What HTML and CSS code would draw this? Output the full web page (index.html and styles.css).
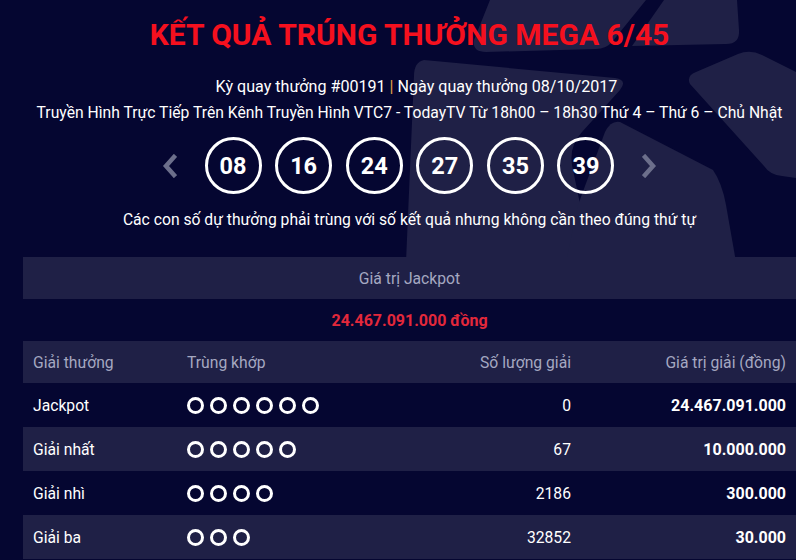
FILE: index.html
```html
<!DOCTYPE html>
<html lang="vi">
<head>
<meta charset="utf-8">
<title>Kết quả Mega 6/45</title>
<link rel="stylesheet" href="styles.css">
</head>
<body>
<svg class="bg-deco" width="796" height="262" viewBox="0 0 796 262" aria-hidden="true">
  <path d="M490,0 H646 L612,42 Q606,49 596,49 L486,52 Q472,52 474,40 Z"/>
  <path d="M664,0 H737 L739,30 Q740,44 726,44 L632,46 Z"/>
  <path d="M424,60 Q414,62 414,76 L406,262 H592 L572,165 Q569,146 582,132 L620,90 Q628,80 615,78 Z"/>
  <path d="M620,122 Q611,120 605,132 L578,205 L566,262 H736 L726,205 Q722,183 713,170 Z"/>
  <path d="M690,84 Q686,76 696,72 L738,54 Q750,49 762,55 L796,72 V178 L782,176 Q770,175 764,166 Z"/>
</svg>
<main class="wrap">
  <h1 class="title">KẾT QUẢ TRÚNG THƯỞNG MEGA 6/45</h1>
  <p class="info draw">Kỳ quay thưởng #00191 <span class="sep">|</span> Ngày quay thưởng 08/10/2017</p>
  <p class="info">Truyền Hình Trực Tiếp Trên Kênh Truyền Hình VTC7 - TodayTV Từ 18h00 – 18h30 Thứ 4 – Thứ 6 – Chủ Nhật</p>
  <div class="balls">
    <svg class="chev" width="15" height="24" viewBox="0 0 15 24"><path d="M12,3 L4,12 L12,21" /></svg>
    <span class="ball">08</span>
    <span class="ball">16</span>
    <span class="ball">24</span>
    <span class="ball">27</span>
    <span class="ball">35</span>
    <span class="ball">39</span>
    <svg class="chev" width="15" height="24" viewBox="0 0 15 24"><path d="M3,3 L11,12 L3,21" /></svg>
  </div>
  <p class="info note">Các con số dự thưởng phải trùng với số kết quả nhưng không cần theo đúng thứ tự</p>

  <section class="results">
    <div class="band head">Giá trị Jackpot</div>
    <div class="band jackpot">24.467.091.000 đồng</div>
    <div class="row head">
      <span>Giải thưởng</span><span>Trùng khớp</span><span class="r">Số lượng giải</span><span class="r">Giá trị giải (đồng)</span>
    </div>
    <div class="row">
      <span>Jackpot</span>
      <span class="dots"><i></i><i></i><i></i><i></i><i></i><i></i></span>
      <span class="r">0</span><span class="r b">24.467.091.000</span>
    </div>
    <div class="row alt">
      <span>Giải nhất</span>
      <span class="dots"><i></i><i></i><i></i><i></i><i></i></span>
      <span class="r">67</span><span class="r b">10.000.000</span>
    </div>
    <div class="row">
      <span>Giải nhì</span>
      <span class="dots"><i></i><i></i><i></i><i></i></span>
      <span class="r">2186</span><span class="r b">300.000</span>
    </div>
    <div class="row alt">
      <span>Giải ba</span>
      <span class="dots"><i></i><i></i><i></i></span>
      <span class="r">32852</span><span class="r b">30.000</span>
    </div>
  </section>
</main>
</body>
</html>
```
FILE: styles.css
```css
html, body {
  margin: 0;
  padding: 0;
  overflow: hidden;
}
body {
  background: #050631;
  font-family: Roboto, "Noto Sans", sans-serif;
  color: #ffffff;
  position: relative;
  height: 560px;
}
.bg-deco {
  position: absolute;
  left: 0;
  top: 0;
  z-index: 0;
}
.bg-deco path {
  fill: #1f2046;
}
.wrap {
  position: relative;
  z-index: 1;
  margin-left: 23px;
  width: 773px;
  padding-top: 17px;
}
.title {
  margin: 0;
  text-align: center;
  font-size: 30px;
  line-height: 36px;
  font-weight: 700;
  color: #f5101e;
}
.info {
  margin: 0;
  text-align: center;
  font-size: 15.7px;
  line-height: 26px;
  color: #ffffff;
  white-space: nowrap;
}
.info.draw {
  font-size: 16.1px;
  margin-top: 21px;
  padding-left: 14px;
}
.sep {
  color: #e6a54a;
}
.balls {
  display: flex;
  align-items: center;
  justify-content: center;
  gap: 13.6px;
  margin-top: 11px;
}
.chev {
  display: block;
}
.chev path {
  fill: none;
  stroke: #6c6f8b;
  stroke-width: 4.5;
  stroke-linecap: square;
  stroke-linejoin: miter;
}
.balls .chev:first-child {
  margin-right: 14px;
}
.balls .chev:last-child {
  margin-left: 14px;
}
.ball {
  box-sizing: border-box;
  width: 57px;
  height: 57px;
  border: 3px solid #ffffff;
  border-radius: 50%;
  display: flex;
  align-items: center;
  justify-content: center;
  font-size: 23.5px;
  font-weight: 700;
}
.note {
  margin-top: 13px;
}
.results {
  margin-top: 24px;
  width: 773px;
  font-size: 15.7px;
}
.band {
  height: 42px;
  display: flex;
  align-items: center;
  justify-content: center;
}
.band.jackpot {
  color: #e3283b;
  font-weight: 700;
  font-size: 16px;
}
.head {
  background: #1f2046;
  color: #a5a8c1;
}
.row {
  display: grid;
  grid-template-columns: 164px 240px 154px 215px;
  align-items: center;
  height: 44px;
  white-space: nowrap;
}
.row.head {
  height: 42px;
}
.row > span {
  padding: 0 10px;
}
.row > span:nth-child(2) {
  padding-left: 0;
}
.row.alt {
  background: #1f2046;
}
.r {
  text-align: right;
}
.b {
  font-weight: 700;
  font-size: 16px;
}
.dots {
  display: flex;
  gap: 6px;
  padding-bottom: 5px;
}
.dots i {
  box-sizing: border-box;
  width: 17px;
  height: 17px;
  border: 3px solid #ffffff;
  border-radius: 50%;
}
```
